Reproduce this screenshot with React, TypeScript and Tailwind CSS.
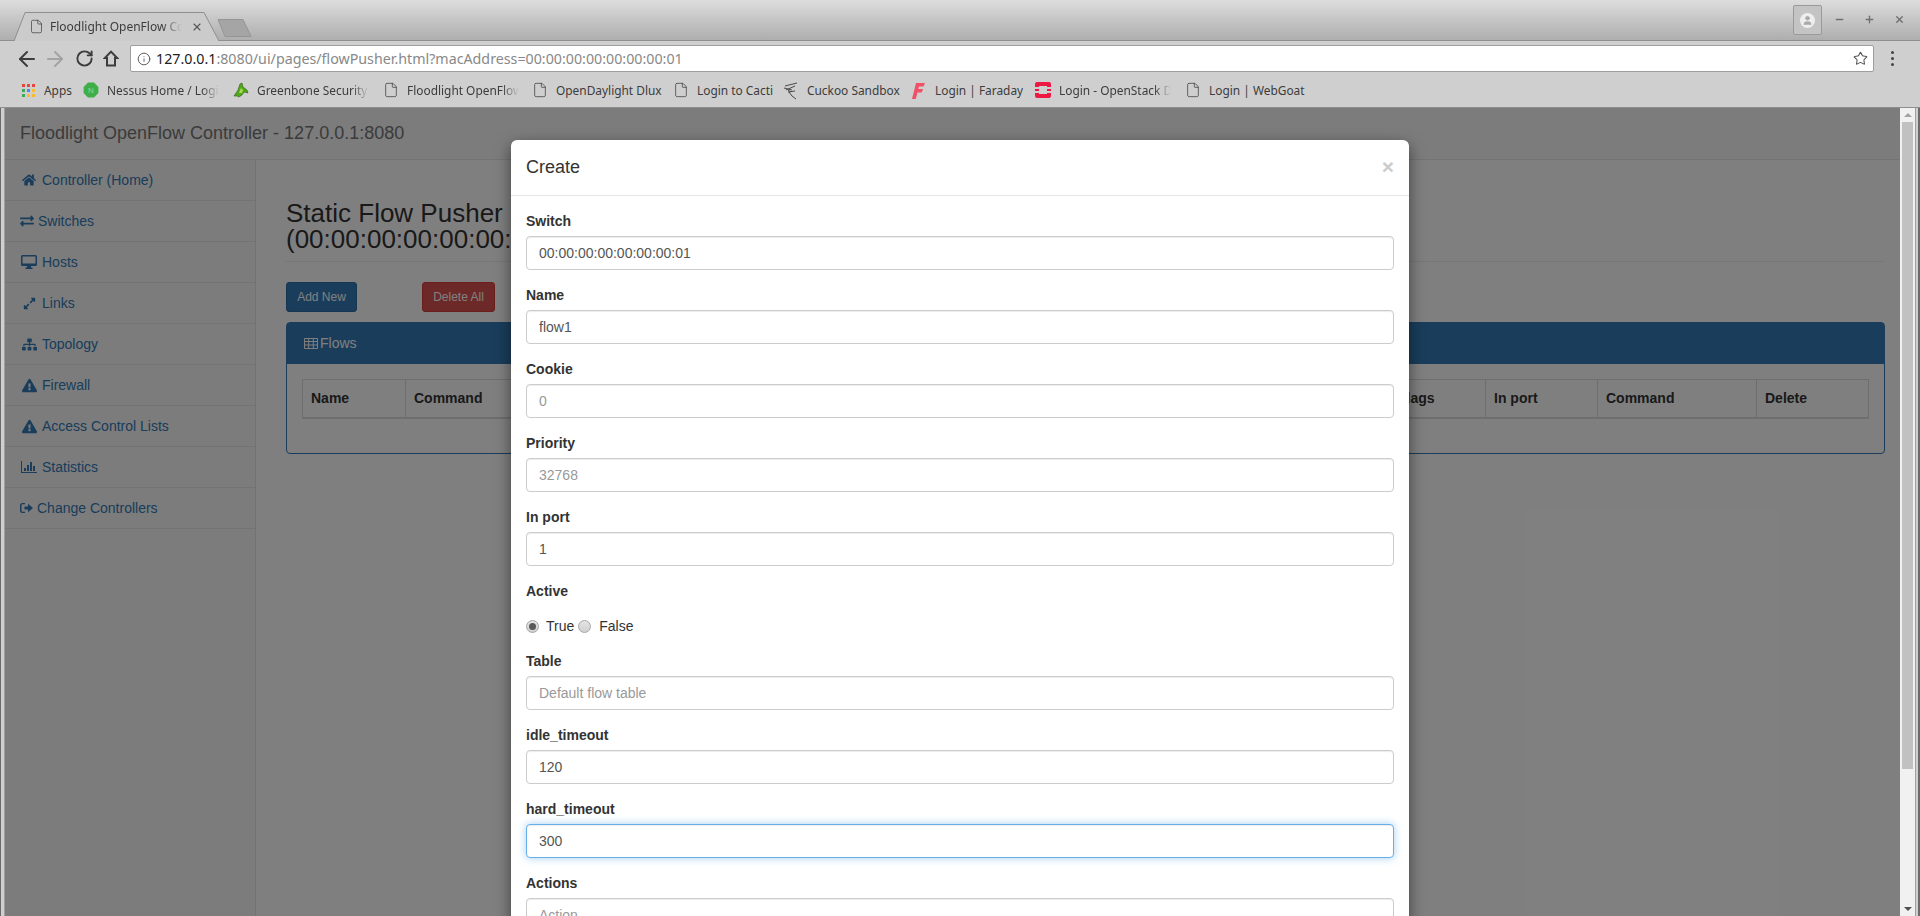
import { ReactNode } from 'react';
import { ArrowLeft, ArrowRight, RotateCw, Info, Star, File, X, Minus, Plus, User } from 'lucide-react';
import {
  FaHome,
  FaExchangeAlt,
  FaExpandAlt,
  FaSitemap,
  FaExclamationTriangle,
} from 'react-icons/fa';

const chromeFont = "font-['Noto_Sans',sans-serif]";

function AppsIcon() {
  const colors = ['#e8453c', '#e8453c', '#e8453c', '#3bab5a', '#4a8af4', '#f9bb2d', '#3bab5a', '#f9bb2d', '#f9bb2d'];
  return (
    <div className="grid grid-cols-3 gap-[2px] w-[13px] h-[13px]">
      {colors.map((c, i) => (
        <div key={i} style={{ backgroundColor: c }} />
      ))}
    </div>
  );
}

function NessusIcon() {
  return (
    <svg width="16" height="16" viewBox="0 0 16 16">
      <path d="M5 .6h6L15.4 5v6L11 15.4H5L.6 11V5z" fill="#3fae49" />
      <text x="8" y="11" textAnchor="middle" fontSize="8" fill="#8fd896" fontFamily="Liberation Sans">N</text>
    </svg>
  );
}

function GreenboneIcon() {
  return (
    <svg width="16" height="16" viewBox="0 0 16 16">
      <path d="M1 14 5 8l2-6 2-1 1 4 4 3 1 3-4-1-2 3-3 2-2-1z" fill="#4fa81c" stroke="#2f5a12" strokeWidth=".6" />
      <path d="M6 11 8 6l2 2-1 3z" fill="#a6dc4a" />
    </svg>
  );
}

function CuckooIcon() {
  return (
    <svg width="16" height="18" viewBox="0 0 16 18" fill="none" stroke="#4a4a4a" strokeWidth="1">
      <path d="M1 6l8 2M2 4l12-3M3 8l9-4M5 10l7-1M6 10l3 4 4 3M8 10l-3-2" />
    </svg>
  );
}

function FaradayIcon() {
  return (
    <svg width="14" height="18" viewBox="0 0 14 18">
      <path d="M4 1h9l-1.5 3.5H7L6.3 7H11l-1.2 3.5H5.5L3.8 17H0z" fill="#ef5266" />
    </svg>
  );
}

function OpenStackIcon() {
  return (
    <svg width="16" height="16" viewBox="0 0 16 16">
      <path d="M2 0h12a2 2 0 0 1 2 2v3h-4V4H4v1H0V2a2 2 0 0 1 2-2zM0 7h4v2H0zM12 7h4v2h-4zM0 11h4v1h8v-1h4v3a2 2 0 0 1-2 2H2a2 2 0 0 1-2-2z" fill="#ed1944" />
    </svg>
  );
}

function HouseIcon() {
  return (
    <svg width="16" height="17" viewBox="0 0 16 17" fill="none" stroke="#3c3c3c" strokeWidth="2" strokeLinejoin="miter">
      <path d="M8 1.6 1.8 8H4v7.5h8V8h2.2z" />
    </svg>
  );
}

function TableIcon() {
  return (
    <svg width="14" height="11" viewBox="0 0 14 11" fill="none" stroke="currentColor" strokeWidth="1">
      <path d="M.5.5h13v10H.5zM.5 3.5h13M.5 7h13M4.7.5v10M9.3.5v10" />
    </svg>
  );
}

function DesktopIcon() {
  return (
    <svg width="16" height="14" viewBox="0 0 16 14" fill="currentColor">
      <path d="M1.5 0h13A1.5 1.5 0 0 1 16 1.500v8a1.500 1.500 0 0 1-1.500 1.500H10v1.500h1.500V14h-7v-1.500H6V11H1.500A1.500 1.500 0 0 1 0 9.500v-8A1.500 1.500 0 0 1 1.500 0zm0 1.500v7h13v-7z" />
    </svg>
  );
}

function StatsIcon() {
  return (
    <svg width="16" height="12" viewBox="0 0 16 12" fill="currentColor">
      <path d="M0 0h1v11h15v1H0zM3 7h2v3H3zM6 4h2v6H6zM9 1h2v9H9zM12 5h2v5h-2z" />
    </svg>
  );
}

function SignOutIcon() {
  return (
    <svg width="13" height="12" viewBox="0 0 13 12" fill="currentColor">
      <path d="M2.500 1H5v1.300H2.500a1 1 0 0 0-1 1v5.400a1 1 0 0 0 1 1H5V11H2.500A2.500 2.500 0 0 1 0 8.500v-5A2.500 2.500 0 0 1 2.500 1zM4.500 4.500H8V1.800L13 6 8 10.200V7.500H4.500z" />
    </svg>
  );
}

const bookmarks: { label: string; icon: ReactNode; width: string; fade?: boolean }[] = [
  { label: 'Apps', icon: <AppsIcon />, width: 'w-[63px]' },
  { label: 'Nessus Home / Login', icon: <NessusIcon />, width: 'w-[150px]', fade: true },
  { label: 'Greenbone Security Assistant', icon: <GreenboneIcon />, width: 'w-[150px]', fade: true },
  { label: 'Floodlight OpenFlow Controller', icon: <File size={16} strokeWidth={1.2} />, width: 'w-[149px]', fade: true },
  { label: 'OpenDaylight Dlux', icon: <File size={16} strokeWidth={1.2} />, width: 'w-[141px]' },
  { label: 'Login to Cacti', icon: <File size={16} strokeWidth={1.2} />, width: 'w-[110px]' },
  { label: 'Cuckoo Sandbox', icon: <CuckooIcon />, width: 'w-[128px]' },
  { label: 'Login | Faraday', icon: <FaradayIcon />, width: 'w-[124px]' },
  { label: 'Login - OpenStack Dashboard', icon: <OpenStackIcon />, width: 'w-[150px]', fade: true },
  { label: 'Login | WebGoat', icon: <File size={16} strokeWidth={1.2} />, width: 'w-[130px]' },
];

function BrowserChrome() {
  return (
    <div className={`${chromeFont} shrink-0 text-[#3c3c3c]`}>
      <div className="relative h-[41px] bg-gradient-to-b from-[#dddddd] to-[#aeaeae] border-b border-[#8f8f8f] pt-[12px] pl-[14px] flex items-start">
        <div className="relative w-[205px] h-[29px] flex items-center pl-[15px] pr-[16px]">
          <svg className="absolute inset-0" width="205" height="29" viewBox="0 0 205 29">
            <path d="M0 29 11 .5h179L205 29" fill="#cbcbcb" stroke="#8f8f8f" strokeWidth="1" />
          </svg>
          <File size={15} strokeWidth={1.2} className="relative shrink-0 text-[#444]" />
          <span className="relative ml-[6px] w-[132px] whitespace-nowrap overflow-hidden text-[12px] [mask-image:linear-gradient(to_right,black_85%,transparent)]">
            Floodlight OpenFlow Controller
          </span>
          <X size={12} strokeWidth={2.2} className="relative ml-auto text-[#555]" />
        </div>
        <svg className="mt-[7px] ml-[-2px]" width="35" height="18" viewBox="0 0 35 18">
          <path d="M1 .5h25L34 17.5H8z" fill="#a5a5a5" stroke="#959595" strokeWidth="1" strokeLinejoin="round" />
        </svg>
        <div className="absolute right-[98px] top-[5px] w-[29px] h-[30px] rounded-[2px] border border-[#9a9a9a] bg-[#c4c4c4] flex items-center justify-center">
          <div className="w-[15px] h-[15px] rounded-full bg-[#eeeeee] flex items-center justify-center">
            <User size={11} className="text-[#a8a8a8]" fill="#a8a8a8" />
          </div>
        </div>
        <Minus size={11} strokeWidth={3} className="absolute right-[75px] top-[14px] text-[#6f6f6f]" />
        <Plus size={11} strokeWidth={3} className="absolute right-[45px] top-[14px] text-[#6f6f6f]" />
        <X size={11} strokeWidth={3} className="absolute right-[15px] top-[14px] text-[#6f6f6f]" />
      </div>

      <div className="bg-[#cfcfcf] h-[67px] border-b border-[#8f8f8f] pl-[5px] pr-[4px]">
        <div className="h-[31px] pt-[4px] flex items-center">
          <ArrowLeft size={24} strokeWidth={2} className="ml-[10px] shrink-0 text-[#3c3c3c]" />
          <ArrowRight size={24} strokeWidth={2} className="ml-[4px] shrink-0 text-[#a3a3a3]" />
          <RotateCw size={19} strokeWidth={2.4} className="ml-[8px] shrink-0 text-[#3c3c3c]" />
          <span className="ml-[9px] shrink-0"><HouseIcon /></span>
          <div className="ml-[11px] w-[1744px] shrink-0 h-[27px] bg-white rounded-[2px] border border-[#9e9e9e] flex items-center">
            <Info size={14} strokeWidth={1.6} className="ml-[6px] text-[#555]" />
            <span className="ml-[5px] pt-[2px] text-[14.25px] leading-none whitespace-nowrap text-[#888]">
              <span className="text-[#222]">127.0.0.1</span>:8080/ui/pages/flowPusher.html?macAddress=00:00:00:00:00:00:00:01
            </span>
            <Star size={15} strokeWidth={1.7} className="ml-auto mr-[5px] text-[#555]" />
          </div>
          <div className="ml-[17px] flex flex-col gap-[3px]">
            <div className="w-[3px] h-[3px] rounded-full bg-[#444]" />
            <div className="w-[3px] h-[3px] rounded-full bg-[#444]" />
            <div className="w-[3px] h-[3px] rounded-full bg-[#444]" />
          </div>
        </div>
        <div className="h-[35px] pt-[2px] flex items-center pl-[15px] text-[11.9px]">
          {bookmarks.map(b => (
            <div key={b.label} className={`${b.width} shrink-0 flex items-center`}>
              <div className="w-[16px] flex justify-center shrink-0 text-[#444]">{b.icon}</div>
              <span
                className={`ml-[8px] whitespace-nowrap overflow-hidden ${
                  b.fade ? 'w-[112px] [mask-image:linear-gradient(to_right,black_85%,transparent)]' : ''
                }`}
              >
                {b.label}
              </span>
            </div>
          ))}
        </div>
      </div>
    </div>
  );
}

const navItems: { label: string; icon: ReactNode; iconBox: string }[] = [
  { label: 'Controller (Home)', icon: <FaHome size={14} />, iconBox: 'w-[18px] mr-[4px]' },
  { label: 'Switches', icon: <FaExchangeAlt size={14} />, iconBox: 'w-[14px] mr-[4px]' },
  { label: 'Hosts', icon: <DesktopIcon />, iconBox: 'w-[18px] mr-[4px]' },
  { label: 'Links', icon: <FaExpandAlt size={13} />, iconBox: 'w-[18px] mr-[4px]' },
  { label: 'Topology', icon: <FaSitemap size={15} />, iconBox: 'w-[18px] mr-[4px]' },
  { label: 'Firewall', icon: <FaExclamationTriangle size={15} />, iconBox: 'w-[18px] mr-[4px]' },
  { label: 'Access Control Lists', icon: <FaExclamationTriangle size={15} />, iconBox: 'w-[18px] mr-[4px]' },
  { label: 'Statistics', icon: <StatsIcon />, iconBox: 'w-[18px] mr-[4px]' },
  { label: 'Change Controllers', icon: <SignOutIcon />, iconBox: 'w-[13px] mr-[4px]' },
];

function Sidebar() {
  return (
    <aside className="w-[251px] shrink-0 bg-[#f8f8f8] border-r border-[#e7e7e7]">
      {navItems.map(item => (
        <div key={item.label} className="h-[41px] border-b border-[#e7e7e7] pl-[15px] flex items-center text-[14px] text-[#337ab7]">
          <span className={`${item.iconBox} flex justify-center shrink-0`}>{item.icon}</span>
          <span>{item.label}</span>
        </div>
      ))}
    </aside>
  );
}

const columns = [
  { label: 'Name', width: 'w-[103px]' },
  { label: 'Command', width: 'w-[328px]' },
  { label: 'Cookie', width: 'w-[328px]' },
  { label: 'Priority', width: 'w-[328px]' },
  { label: 'Flags', width: 'w-[96px]' },
  { label: 'In port', width: 'w-[112px]' },
  { label: 'Command', width: 'w-[159px]' },
  { label: 'Delete', width: 'w-[112px]' },
];

function PageContent() {
  return (
    <main className="flex-1 min-w-0 pl-[30px] pr-[15px] bg-white">
      <div className="pt-[40px] h-[102px] border-b border-[#eeeeee]">
        <h1 className="text-[26px] leading-[26.4px] text-[#333] whitespace-nowrap">
          Static Flow Pusher
          <br />
          (00:00:00:00:00:00:00:01)
        </h1>
      </div>
      <div className="mt-[20px] flex">
        <button className="w-[71px] h-[30px] rounded-[3px] bg-[#337ab7] border border-[#2e6da4] text-white text-[12px]">Add New</button>
        <button className="ml-[65px] w-[73px] h-[30px] rounded-[3px] bg-[#d9534f] border border-[#d43f3a] text-white text-[12px]">Delete All</button>
      </div>
      <div className="mt-[10px] border border-[#337ab7] rounded-[4px] h-[132px]">
        <div className="h-[41px] bg-[#337ab7] text-white text-[14px] pl-[17px] pr-[15px] flex items-center">
          <TableIcon />
          <span className="ml-[2px]">Flows</span>
        </div>
        <div className="p-[15px]">
          <table className="w-[1566px] table-fixed border border-[#dddddd] border-collapse">
            <thead>
              <tr>
                {columns.map((col, i) => (
                  <th key={i} className={`${col.width} h-[38px] px-[8px] border border-[#dddddd] border-b-2 text-left text-[14px] font-bold text-[#333]`}>
                    {col.label}
                  </th>
                ))}
              </tr>
            </thead>
          </table>
        </div>
      </div>
    </main>
  );
}

function Field({ label, value, placeholder, focused }: { label: string; value?: string; placeholder?: string; focused?: boolean }) {
  return (
    <div className="mb-[15px]">
      <label className="block mb-[5px] text-[14px] leading-[20px] font-bold text-[#333]">{label}</label>
      <input
        readOnly
        value={value ?? ''}
        placeholder={placeholder}
        className={`block w-full h-[34px] px-[12px] rounded-[4px] border text-[14px] text-[#555] bg-white placeholder:text-[#999] outline-none ${
          focused
            ? 'border-[#66afe9] shadow-[inset_0_1px_1px_rgba(0,0,0,0.075),0_0_8px_rgba(102,175,233,0.6)]'
            : 'border-[#cccccc] shadow-[inset_0_1px_1px_rgba(0,0,0,0.075)]'
        }`}
      />
    </div>
  );
}

function Radio({ checked }: { checked?: boolean }) {
  return (
    <span className="w-[13px] h-[13px] rounded-full border border-[#a6a6a6] bg-gradient-to-b from-[#e4e4e4] to-[#d0d0d0] flex items-center justify-center">
      {checked && <span className="w-[7px] h-[7px] rounded-full bg-[#5a5a5a]" />}
    </span>
  );
}

function CreateModal() {
  return (
    <div className="absolute left-[506px] top-[32px] w-[898px] bg-white rounded-t-[6px] shadow-[0_5px_15px_rgba(0,0,0,0.5)] overflow-hidden">
      <div className="h-[56px] border-b border-[#e5e5e5] px-[15px] flex items-center justify-between">
        <h4 className="text-[18px] text-[#333]">Create</h4>
        <span className="text-[21px] font-bold leading-none text-[#cccccc] mb-[3px]">×</span>
      </div>
      <div className="p-[15px] h-[800px]">
        <Field label="Switch" value="00:00:00:00:00:00:00:01" />
        <Field label="Name" value="flow1" />
        <Field label="Cookie" placeholder="0" />
        <Field label="Priority" placeholder="32768" />
        <Field label="In port" value="1" />
        <label className="block pb-[15px] text-[14px] leading-[20px] font-bold text-[#333]">Active</label>
        <div className="mb-[15px] h-[20px] flex items-center text-[14px] text-[#333]">
          <Radio checked />
          <span className="ml-[7px]">True</span>
          <span className="ml-[4px]"><Radio /></span>
          <span className="ml-[8px]">False</span>
        </div>
        <Field label="Table" placeholder="Default flow table" />
        <Field label="idle_timeout" value="120" />
        <Field label="hard_timeout" value="300" focused />
        <Field label="Actions" placeholder="Action" />
      </div>
    </div>
  );
}

function Scrollbar() {
  return (
    <div className="w-[15px] shrink-0 bg-[#f1f1f1] flex flex-col items-center">
      <div className="mt-[5px] w-0 h-0 border-l-[4px] border-r-[4px] border-b-[4px] border-l-transparent border-r-transparent border-b-[#a3a3a3]" />
      <div className="mt-[5px] w-[11px] h-[647px] bg-[#c1c1c1]" />
      <div className="mt-auto mb-[5px] w-0 h-0 border-l-[4px] border-r-[4px] border-t-[4px] border-l-transparent border-r-transparent border-t-[#505050]" />
    </div>
  );
}

export default function App() {
  return (
    <div className="h-screen w-full overflow-hidden flex flex-col bg-[#cfcfcf] font-['Liberation_Sans',Arial,sans-serif]">
      <BrowserChrome />
      <div className="flex-1 min-h-0 flex">
        <div className="w-[5px] shrink-0 border-l border-l-[#6b6b6b] border-r border-r-[#a0a0a0]" />
        <div className="relative flex-1 min-w-0 overflow-hidden flex flex-col bg-white">
          <div className="h-[52px] shrink-0 bg-[#f8f8f8] border-b border-[#e7e7e7] pl-[15px] flex items-center text-[18px] text-[#777]">
            Floodlight OpenFlow Controller - 127.0.0.1:8080
          </div>
          <div className="flex-1 min-h-0 flex">
            <Sidebar />
            <PageContent />
          </div>
          <div className="absolute inset-0 bg-black/50" />
          <CreateModal />
        </div>
        <Scrollbar />
        <div className="w-[5px] shrink-0 border-l border-l-[#a0a0a0] border-r-2 border-r-[#6b6b6b]" />
      </div>
    </div>
  );
}
